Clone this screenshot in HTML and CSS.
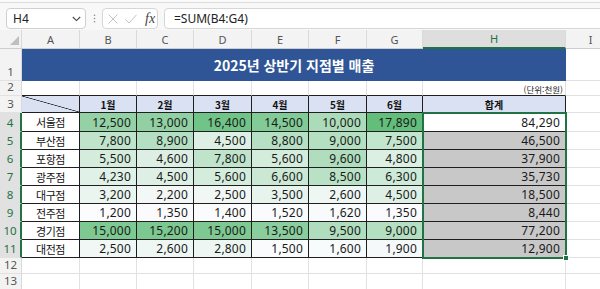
FILE: index.html
```html
<!DOCTYPE html>
<html lang="ko">
<head>
<meta charset="utf-8">
<title>2025년 상반기 지점별 매출</title>
<link rel="stylesheet" href="styles.css">
</head>
<body>
<div class="app">
  <div class="topline"></div>
  <div class="fbar">
    <div class="namebox">
      <span>H4</span>
      <svg class="chev" width="9" height="6" viewBox="0 0 9 6"><path d="M0.8 1 L4.5 4.6 L8.2 1" fill="none" stroke="#444" stroke-width="1.1"/></svg>
    </div>
    <div class="dots">
      <svg width="3" height="9" viewBox="0 0 3 9"><circle cx="1.5" cy="1.2" r="0.8" fill="#8a8a8a"/><circle cx="1.5" cy="4.5" r="0.8" fill="#8a8a8a"/><circle cx="1.5" cy="7.8" r="0.8" fill="#8a8a8a"/></svg>
    </div>
    <div class="btns">
      <svg class="bx" width="10" height="10" viewBox="0 0 10 10"><path d="M0.5 0.5 L9.5 9.5 M9.5 0.5 L0.5 9.5" stroke="#c2c2c2" stroke-width="1"/></svg>
      <svg class="bc" width="12" height="10" viewBox="0 0 12 10"><path d="M0.5 5.5 L4 9 L11.5 0.8" fill="none" stroke="#c2c2c2" stroke-width="1"/></svg>
      <span class="fx">fx</span>
    </div>
    <div class="formula">=SUM(B4:G4)</div>
  </div>

  <div class="sheet">
    <div class="corner"><svg width="9" height="9" viewBox="0 0 9 9"><path d="M9 0 L9 9 L0 9 Z" fill="#bfbfbf"/></svg></div>
    <div class="ch">A</div><div class="ch">B</div><div class="ch">C</div><div class="ch">D</div><div class="ch">E</div><div class="ch">F</div><div class="ch">G</div><div class="ch sel">H</div><div class="ch">I</div>

    <div class="rh">1</div>
    <div class="title">2025년 상반기 지점별 매출</div>
    <div class="cell"></div>

    <div class="rh">2</div>
    <div class="cell edge"></div><div class="cell edge"></div><div class="cell edge"></div><div class="cell edge"></div><div class="cell edge"></div><div class="cell edge"></div><div class="cell edge"></div>
    <div class="cell edge unit">(단위:천원)</div>
    <div class="cell"></div>

    <div class="rh">3</div>
    <div class="t hd diag"></div>
    <div class="t hd">1월</div><div class="t hd">2월</div><div class="t hd">3월</div><div class="t hd">4월</div><div class="t hd">5월</div><div class="t hd">6월</div>
    <div class="t hd">합계</div>
    <div class="cell"></div>

    <div class="rh sel">4</div>
    <div class="t name">서울점</div>
    <div class="t num" style="background:rgb(148,210,166)">12,500</div>
    <div class="t num" style="background:rgb(144,208,162)">13,000</div>
    <div class="t num" style="background:rgb(113,196,135)">16,400</div>
    <div class="t num" style="background:rgb(130,203,150)">14,500</div>
    <div class="t num" style="background:rgb(171,219,185)">10,000</div>
    <div class="t num" style="background:rgb(99,190,123)">17,890</div>
    <div class="t num active">84,290</div>
    <div class="cell"></div>

    <div class="rh sel">5</div>
    <div class="t name">부산점</div>
    <div class="t num" style="background:rgb(192,227,203)">7,800</div>
    <div class="t num" style="background:rgb(181,223,194)">8,900</div>
    <div class="t num" style="background:rgb(222,240,229)">4,500</div>
    <div class="t num" style="background:rgb(182,224,195)">8,800</div>
    <div class="t num" style="background:rgb(180,223,193)">9,000</div>
    <div class="t num" style="background:rgb(194,229,205)">7,500</div>
    <div class="t num tot">46,500</div>
    <div class="cell"></div>

    <div class="rh sel">6</div>
    <div class="t name">포항점</div>
    <div class="t num" style="background:rgb(213,236,221)">5,500</div>
    <div class="t num" style="background:rgb(221,239,228)">4,600</div>
    <div class="t num" style="background:rgb(192,227,203)">7,800</div>
    <div class="t num" style="background:rgb(212,236,220)">5,600</div>
    <div class="t num" style="background:rgb(175,221,189)">9,600</div>
    <div class="t num" style="background:rgb(219,239,226)">4,800</div>
    <div class="t num tot">37,900</div>
    <div class="cell"></div>

    <div class="rh sel">7</div>
    <div class="t name">광주점</div>
    <div class="t num" style="background:rgb(224,241,231)">4,230</div>
    <div class="t num" style="background:rgb(222,240,229)">4,500</div>
    <div class="t num" style="background:rgb(212,236,220)">5,600</div>
    <div class="t num" style="background:rgb(202,232,212)">6,600</div>
    <div class="t num" style="background:rgb(185,225,197)">8,500</div>
    <div class="t num" style="background:rgb(205,233,215)">6,300</div>
    <div class="t num tot">35,730</div>
    <div class="cell"></div>

    <div class="rh sel">8</div>
    <div class="t name">대구점</div>
    <div class="t num" style="background:rgb(234,245,239)">3,200</div>
    <div class="t num" style="background:rgb(243,248,247)">2,200</div>
    <div class="t num" style="background:rgb(240,247,245)">2,500</div>
    <div class="t num" style="background:rgb(231,243,237)">3,500</div>
    <div class="t num" style="background:rgb(239,247,244)">2,600</div>
    <div class="t num" style="background:rgb(222,240,229)">4,500</div>
    <div class="t num tot">18,500</div>
    <div class="cell"></div>

    <div class="rh sel">9</div>
    <div class="t name">전주점</div>
    <div class="t num" style="background:rgb(252,252,255)">1,200</div>
    <div class="t num" style="background:rgb(251,251,254)">1,350</div>
    <div class="t num" style="background:rgb(250,251,253)">1,400</div>
    <div class="t num" style="background:rgb(249,251,252)">1,520</div>
    <div class="t num" style="background:rgb(248,250,252)">1,620</div>
    <div class="t num" style="background:rgb(251,251,254)">1,350</div>
    <div class="t num tot">8,440</div>
    <div class="cell"></div>

    <div class="rh sel">10</div>
    <div class="t name">경기점</div>
    <div class="t num" style="background:rgb(126,201,146)">15,000</div>
    <div class="t num" style="background:rgb(124,200,144)">15,200</div>
    <div class="t num" style="background:rgb(126,201,146)">15,000</div>
    <div class="t num" style="background:rgb(139,206,158)">13,500</div>
    <div class="t num" style="background:rgb(176,221,189)">9,500</div>
    <div class="t num" style="background:rgb(180,223,193)">9,000</div>
    <div class="t num tot">77,200</div>
    <div class="cell"></div>

    <div class="rh sel">11</div>
    <div class="t name">대전점</div>
    <div class="t num" style="background:rgb(240,247,245)">2,500</div>
    <div class="t num" style="background:rgb(239,247,244)">2,600</div>
    <div class="t num" style="background:rgb(237,246,242)">2,800</div>
    <div class="t num" style="background:rgb(249,251,253)">1,500</div>
    <div class="t num" style="background:rgb(248,251,252)">1,600</div>
    <div class="t num" style="background:rgb(246,249,250)">1,900</div>
    <div class="t num tot">12,900</div>
    <div class="cell"></div>

    <div class="rh">12</div>
    <div class="cell"></div><div class="cell"></div><div class="cell"></div><div class="cell"></div><div class="cell"></div><div class="cell"></div><div class="cell"></div><div class="cell"></div><div class="cell"></div>

    <div class="rh">13</div>
    <div class="cell"></div><div class="cell"></div><div class="cell"></div><div class="cell"></div><div class="cell"></div><div class="cell"></div><div class="cell"></div><div class="cell"></div><div class="cell"></div>

    <div class="selbox"><div class="handle"></div></div>
  </div>
</div>
</body>
</html>
```

FILE: styles.css
```css
* {
  box-sizing: border-box;
  margin: 0;
  padding: 0;
}

body {
  margin: 0;
  background: #ffffff;
  font-family: "Noto Sans", "Noto Sans CJK KR", sans-serif;
  color: #111;
}

.app {
  width: 600px;
  height: 289px;
  overflow: hidden;
}

/* ---------- formula bar ---------- */
.topline {
  height: 3px;
  background: #fafafa;
  border-bottom: 1px solid #dcdcdc;
}

.fbar {
  height: 27px;
  background: #f8f8f8;
  display: flex;
  align-items: flex-start;
  padding: 5px 0 0 6px;
}

.namebox {
  width: 80px;
  height: 21px;
  background: #fff;
  border: 1px solid #d0d0d0;
  border-radius: 4px;
  display: flex;
  align-items: center;
  justify-content: space-between;
  padding: 0 4px 0 6px;
  font-size: 12px;
  color: #222;
}

.dots {
  width: 16px;
  height: 21px;
  display: flex;
  align-items: center;
  justify-content: center;
}

.btns {
  width: 56px;
  height: 21px;
  background: #fff;
  border: 1px solid #d6d6d6;
  border-radius: 4px;
  display: flex;
  align-items: center;
  padding-left: 5px;
}

.bc {
  margin-left: 7px;
}

.fx {
  margin-left: 8px;
  font-family: "Liberation Serif", serif;
  font-style: italic;
  font-size: 14px;
  color: #444;
  line-height: 1;
}

.formula {
  flex: 1;
  height: 21px;
  margin-left: 6px;
  margin-right: -8px;
  background: #fff;
  border: 1px solid #d6d6d6;
  border-radius: 4px;
  padding-left: 9px;
  display: flex;
  align-items: center;
  font-size: 12px;
  color: #222;
}

/* ---------- sheet grid ---------- */
.sheet {
  position: relative;
  display: grid;
  grid-template-columns: 22px 58px 57px 57px 58px 57px 58px 56px 143px 50px;
  grid-template-rows: 19px 32px 15px 17px 19px repeat(7, 18px) 16px 16px;
  width: 616px;
}

.corner {
  background: #f3f3f3;
  border-right: 1px solid #d9d9d9;
  border-bottom: 1px solid #cdcdcd;
  display: flex;
  align-items: flex-end;
  justify-content: flex-end;
  padding: 0 2px 3px 0;
}

.ch {
  background: #f3f3f3;
  border-right: 1px solid #dadada;
  border-bottom: 1px solid #cdcdcd;
  display: flex;
  align-items: center;
  justify-content: center;
  font-size: 11px;
  color: #555;
}

.ch.sel {
  background: #dedede;
  color: #217346;
  border-bottom: 2px solid #217346;
}

.rh {
  background: #f3f3f3;
  border-right: 1px solid #d9d9d9;
  border-bottom: 1px solid #e1e1e1;
  display: flex;
  align-items: flex-end;
  justify-content: center;
  padding-bottom: 1px;
  font-size: 11.5px;
  line-height: 14px;
  color: #555;
}

.rh.sel {
  background: #e1e1e1;
  color: #217346;
  border-right: 2px solid #217346;
}

.cell {
  border-right: 1px solid #e1e1e1;
  border-bottom: 1px solid #e1e1e1;
  display: flex;
  align-items: center;
  white-space: nowrap;
  overflow: hidden;
}

.cell.edge {
  border-bottom-color: #1f1f1f;
}

.unit {
  justify-content: flex-end;
  align-items: flex-end;
  padding-right: 2px;
  font-family: "Noto Sans CJK KR", sans-serif;
  font-size: 8.5px;
  line-height: 12px;
  color: #222;
}

.title {
  grid-column: span 8;
  background: #2f5597;
  color: #fff;
  display: flex;
  align-items: center;
  justify-content: center;
  font-family: "Noto Sans CJK KR", sans-serif;
  font-weight: 700;
  font-size: 14px;
}

.t {
  border-right: 1px solid #1f1f1f;
  border-bottom: 1px solid #1f1f1f;
  display: flex;
  align-items: center;
  white-space: nowrap;
  overflow: hidden;
}

.hd {
  background: #d9e1f2;
  justify-content: center;
  font-family: "Noto Sans CJK KR", sans-serif;
  font-weight: 700;
  font-size: 10px;
  color: #111;
}

.diag {
  background: linear-gradient(to top right, transparent calc(50% - 0.7px), #222 50%, transparent calc(50% + 0.7px)), #d9e1f2;
}

.name {
  justify-content: center;
  font-family: "Noto Sans CJK KR", sans-serif;
  font-size: 11px;
  letter-spacing: -0.4px;
  color: #111;
}

.num {
  justify-content: flex-end;
  padding-right: 5px;
  font-family: "Noto Sans", "Noto Sans CJK KR", sans-serif;
  font-size: 12px;
  letter-spacing: 0.2px;
  color: #1a1a1a;
}

.active {
  background: #ffffff;
}

.tot {
  background: #c8c8c8;
}

.selbox {
  position: absolute;
  grid-column: 9 / 10;
  grid-row: 5 / 13;
  inset: -1px;
  border: 2px solid #217346;
  pointer-events: none;
}

.handle {
  position: absolute;
  right: -4px;
  bottom: -4px;
  width: 6px;
  height: 6px;
  background: #217346;
  border: 1px solid #fff;
}
```
